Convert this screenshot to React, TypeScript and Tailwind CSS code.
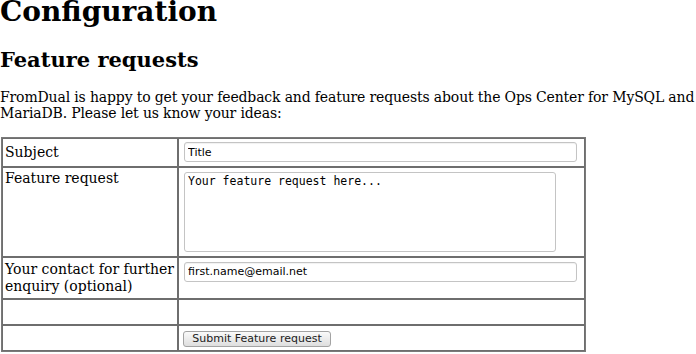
import React from "react";

export default function App() {
  const serif = { fontFamily: '"DejaVu Serif", serif' };
  const sans = "font-['DejaVu_Sans',sans-serif]";
  const inputCls = `block h-[20px] rounded-[3px] border border-[#c4c4c4] bg-white px-[3px] text-[11px] text-black shadow-[inset_0_1px_1px_rgba(0,0,0,0.06)] ${sans} outline-none`;
  const tdL = "border border-[#6e6e6e] px-[2px] align-middle";
  const tdR = "border border-[#6e6e6e] p-0";
  return (
    <div className="min-h-[354px] w-[696px] overflow-hidden bg-white text-[14px] leading-[1.17] text-black" style={serif}>
      <h1 className="mt-[-4px] mb-[19px] text-[28px] font-bold leading-[1.164]">Configuration</h1>
      <h2 className="mb-[17px] text-[21px] font-bold leading-[1.164]">Feature requests</h2>
      <p className="mb-[15px] w-[700px] tracking-[-0.15px] leading-[1.164]">
        FromDual is happy to get your feedback and feature requests about the Ops Center for MySQL and MariaDB. Please let us know your ideas:
      </p>
      <table className="ml-[1px] w-[585px] border-separate border-spacing-0 border border-[#7a7a7a]">
        <tbody>
          <tr>
            <td className={`${tdL} h-[29px] w-[176px]`}>Subject</td>
            <td className={`${tdR} align-middle`}>
              <input className={`${inputCls} ml-[5px] w-[393px]`} defaultValue="Title" />
            </td>
          </tr>
          <tr>
            <td className={`${tdL} h-[90px] !align-top pt-[2px]`}>Feature request</td>
            <td className={`${tdR} align-middle`}>
              <textarea
                className="ml-[5px] block h-[80px] w-[372px] resize-none rounded-[3px] border border-[#c4c4c4] bg-white px-[3px] pt-[2px] text-[11.5px] leading-[1.2] text-black outline-none font-['DejaVu_Sans_Mono',monospace]"
                defaultValue="Your feature request here..."
              />
            </td>
          </tr>
          <tr>
            <td className={`${tdL} h-[42px]`}>
              Your contact for further
              <br />
              enquiry (optional)
            </td>
            <td className={`${tdR} align-top pt-[4px]`}>
              <input className={`${inputCls} ml-[5px] w-[393px]`} defaultValue="first.name@email.net" />
            </td>
          </tr>
          <tr>
            <td className={`${tdL} h-[26px]`}></td>
            <td className={tdR}></td>
          </tr>
          <tr>
            <td className={`${tdL} h-[26px]`}></td>
            <td className={`${tdR} align-middle pt-[2px]`}>
              <button
                type="button"
                className={`ml-[4px] block h-[16px] w-[148px] rounded-[3px] border border-[#a3a3a3] bg-gradient-to-b from-[#fafafa] to-[#dedede] text-[11px] leading-[14px] text-[#222] ${sans}`}
              >
                Submit Feature request
              </button>
            </td>
          </tr>
        </tbody>
      </table>
    </div>
  );
}
